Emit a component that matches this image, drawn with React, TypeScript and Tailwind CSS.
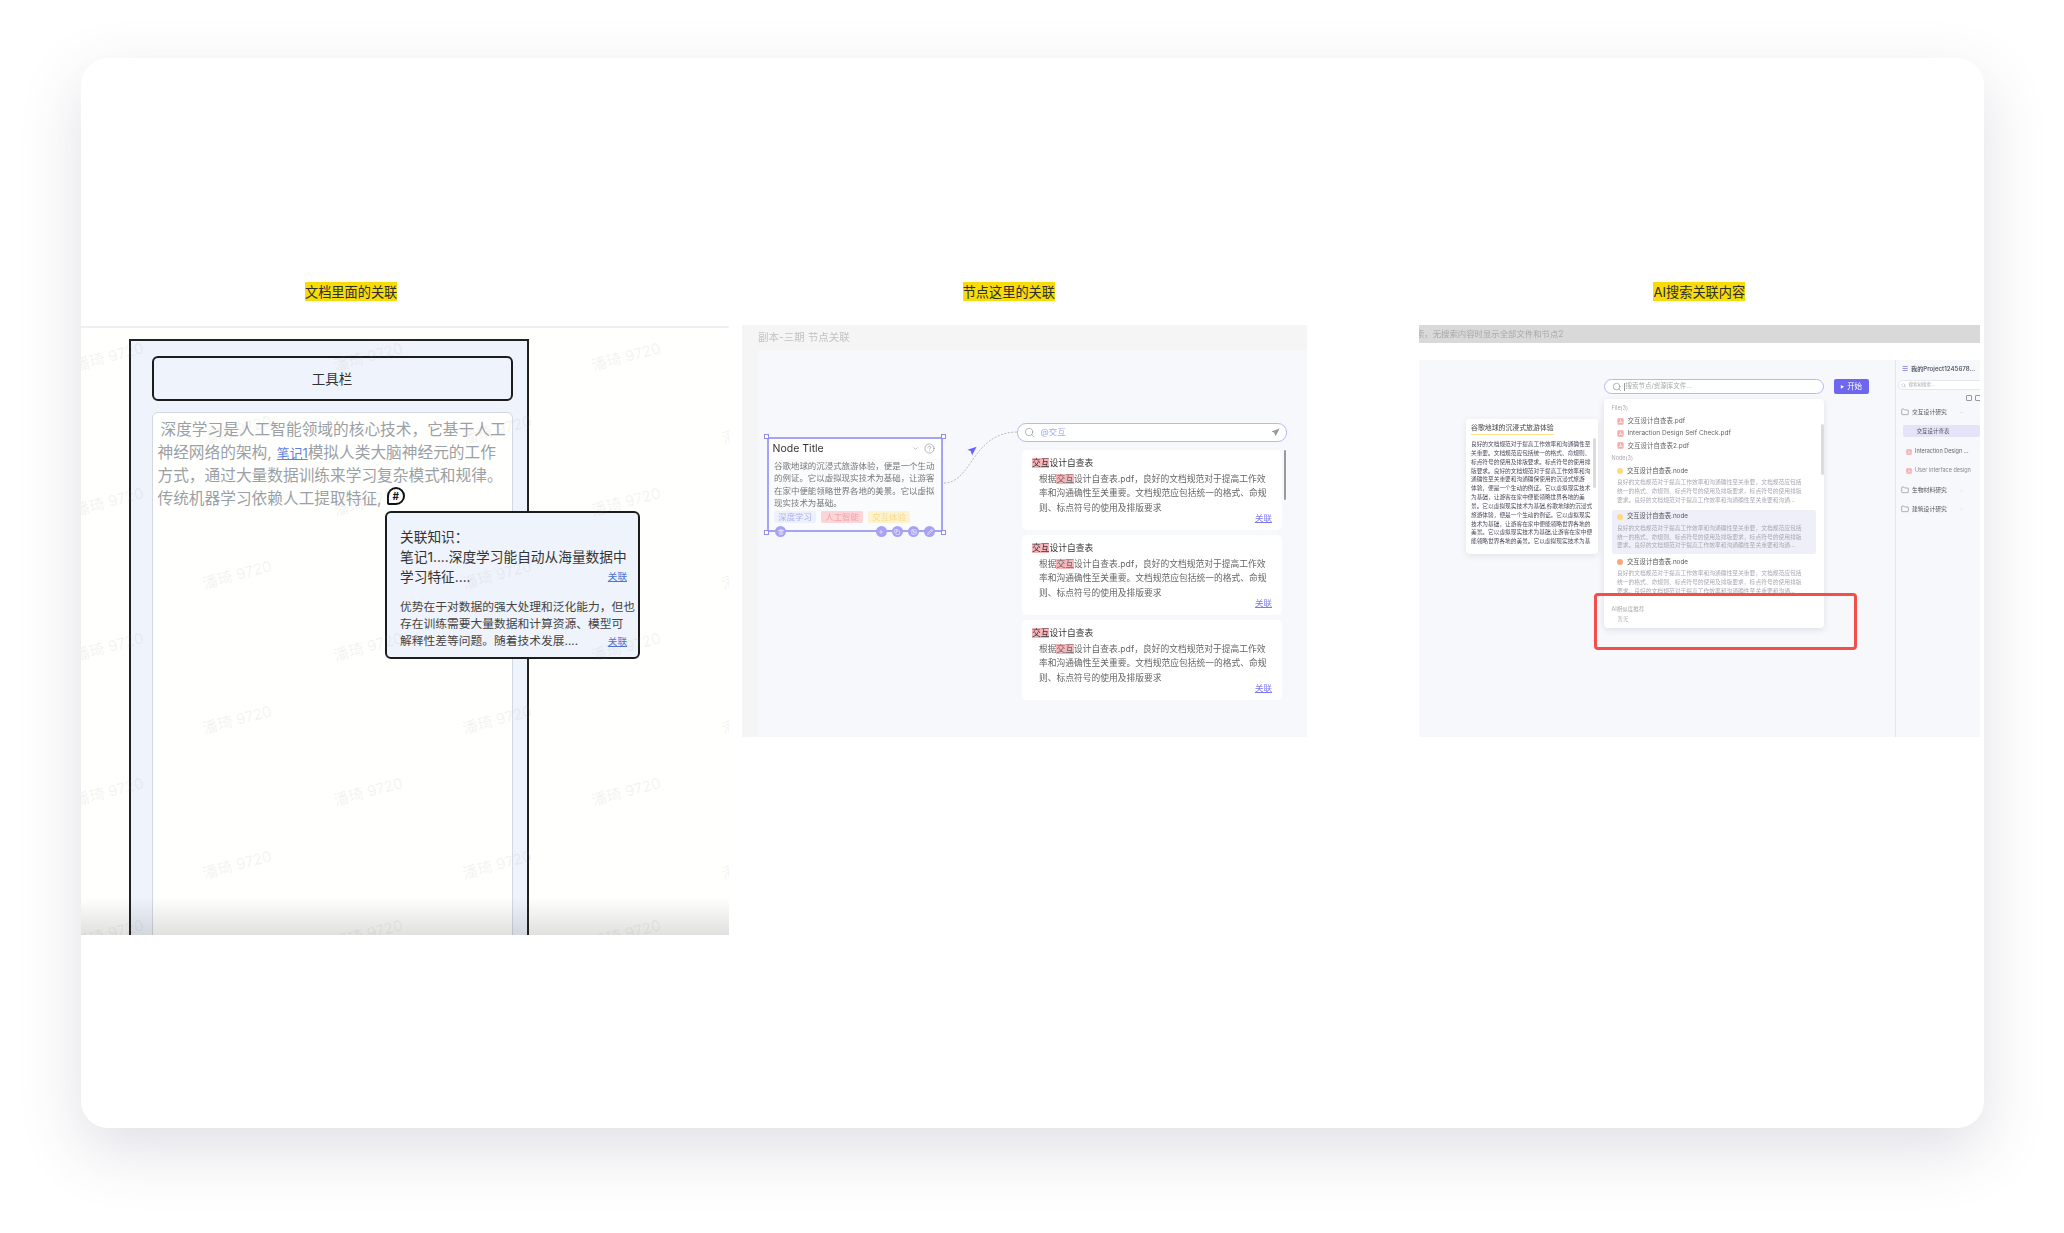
import { ChevronDown, ChevronLeft, CircleHelp, Folder, Search, Plus, Copy, Image, Pencil, Trash2 } from "lucide-react";

const watermarks = [
  [27, 29], [286, 29], [544, 29],
  [155, 102], [415, 102], [674, 102],
  [27, 174], [286, 174], [544, 174],
  [155, 247], [415, 247], [674, 247],
  [27, 319], [286, 319], [544, 319],
  [155, 392], [415, 392], [674, 392],
  [27, 464], [286, 464], [544, 464],
  [155, 537], [415, 537], [674, 537],
  [27, 606], [286, 606], [544, 606],
];

const Plane = ({ className }: { className: string }) => (
  <svg viewBox="0 0 12 12" className={className} fill="currentColor">
    <path d="M11.5 0.8 L0.6 4.6 L4.6 6.4 L6.2 11 Z" />
    <path d="M11.5 0.8 L4.6 6.4 L5 9 Z" opacity="0.65" />
  </svg>
);

const Pdf = ({ className }: { className: string }) => (
  <svg viewBox="0 0 10 10" className={className}>
    <rect x="0.5" y="0.5" width="9" height="9" rx="1.5" fill="#f5a9a9" />
    <path d="M2.5 7.5 C4.5 6 5.2 4 4.8 2.5 C5 4.5 6 6 7.8 6.4 C6 6 4 6.5 2.5 7.5 Z" fill="none" stroke="#fff" strokeWidth="0.8" />
  </svg>
);

const Link = ({ className = "" }: { className?: string }) => (
  <span className={`underline whitespace-nowrap ${className}`}>关联</span>
);

const Title = ({ children, left }: { children: string; left: string }) => (
  <div className={`mt-[224px] h-[19px] w-fit bg-[#f7dc0a] text-[13.2px] leading-[20px] text-[#2d2d2d] whitespace-nowrap ${left}`}>
    {children}
  </div>
);

const ResultCard = () => (
  <div className="h-[80px] w-[260px] ml-[4.5px] rounded-[5px] bg-white pl-[10px] pt-[7px] text-[8.75px] whitespace-nowrap">
    <div className="leading-[12px] text-[#333]">
      <span className="bg-[#f5b5b9]">交互</span>设计自查表
    </div>
    <div className="ml-[7px] mt-[3px] leading-[14.4px] text-[#666]">
      <div>
        根据<span className="bg-[#f5b5b9]">交互</span>设计自查表.pdf，良好的文档规范对于提高工作效
      </div>
      <div>率和沟通确性至关重要。文档规范应包括统一的格式、命规</div>
      <div>则、标点符号的使用及排版要求</div>
    </div>
    <div className="flex justify-end pr-[10px] -mt-[2px] text-[8.5px] leading-[11px] text-[#7c78ee]">
      <Link />
    </div>
  </div>
);

const nodeLines = [
  "良好的文档规范对于提高工作效率和沟通确性至关重要，文档规范应包括",
  "统一的格式、命规则、标点符号的使用及排版要求，标点符号的使用排版",
  "要求。良好的文档规范对于提高工作效率和沟通确性至关重要和沟通...",
];

const NodeItem = ({ dot, active = false }: { dot: string; active?: boolean }) => (
  <div className={`h-[44px] w-[204px] rounded-[2px] pl-[5.5px] pt-[1px] whitespace-nowrap ${active ? "bg-[#efeffa]" : ""}`}>
    <div className="flex items-center gap-[4px] h-[11px] text-[6.3px] text-[#555]">
      <span className={`h-[6px] w-[6px] rounded-full ${dot}`} />
      交互设计自查表.node
    </div>
    <div className="mt-[1.5px] text-[5.77px] leading-[8.8px] text-[#a9a9b4]">
      {nodeLines.map((l) => (
        <div key={l}>{l}</div>
      ))}
    </div>
  </div>
);

const docLines = [
  "良好的文档规范对于提高工作效率和沟通确性至",
  "关重要。文档规范应包括统一的格式、命规则、",
  "标点符号的使用及排版要求。标点符号的使用排",
  "版要求。良好的文档规范对于提高工作效率和沟",
  "通确性至关重要和沟通确保使用的沉浸式旅游",
  "体验，便是一个生动的例证。它以虚拟现实技术",
  "为基础，让游客在家中便能领略世界各地的美",
  "景。它以虚拟现实技术为基础,谷歌地球的沉浸式",
  "旅游体验，便是一个生动的例证。它以虚拟现实",
  "技术为基础，让游客在家中便能领略世界各地的",
  "美景。它以虚拟现实技术为基础,让游客在家中便",
  "能领略世界各地的美景。它以虚拟现实技术为基",
];

const FolderRow = ({ label, open = false }: { label: string; open?: boolean }) => (
  <div className="flex h-[12px] items-center pl-[5px] text-[5.8px] text-[#555] whitespace-nowrap">
    <Folder className="h-[8px] w-[8px] text-[#666]" strokeWidth={1.5} />
    <span className="ml-[3px] w-[47px]">{label}</span>
    {open ? (
      <ChevronDown className="h-[5px] w-[5px] text-[#bbb]" />
    ) : (
      <ChevronLeft className="h-[5px] w-[5px] text-[#ccc]" />
    )}
  </div>
);

export default function App() {
  return (
    <div className="h-[1233px] w-[2064px] overflow-hidden bg-white pl-[81px] pt-[58px] font-['Inter','Noto_Sans_CJK_SC',sans-serif]">
      <div className="flex h-[1070px] w-[1903px] items-start rounded-[27px] bg-white shadow-[0_22px_62px_rgba(70,65,100,0.17)]">
        {/* 文档 */}
        <div className="w-[648px] shrink-0">
          <Title left="ml-[224px]">文档里面的关联</Title>
          <div className="relative mt-[25px] h-[609px] overflow-hidden border-t-2 border-[#f0f0f2] bg-[#fffffd] pl-[47.5px] pt-[11px]">
            <div className="flex h-[620px] w-[400px] flex-col border-2 border-[#222] bg-[#eff3fb] px-[21px] pt-[15px]">
              <div className="flex h-[45px] w-[361px] shrink-0 items-center justify-center rounded-[6px] border-2 border-[#1c1c1c] pt-[2px] text-[13.5px] text-[#333]">
                工具栏
              </div>
              <div className="mt-[11px] flex-1 w-[361px] rounded-[6px] border border-[#d3d7e0] bg-[#fffffd] pl-[5px] pt-[6px] text-[15.7px] leading-[22.7px] text-[#9b9fa6] whitespace-nowrap">
                <div className="pl-[3px]">深度学习是人工智能领域的核心技术，它基于人工</div>
                <div>
                  神经网络的架构,<span className="ml-[5px] text-[12.8px] text-[#5b82de] underline">笔记1</span>模拟人类大脑神经元的工作
                </div>
                <div>方式，通过大量数据训练来学习复杂模式和规律。</div>
                <div className="flex items-center">
                  传统机器学习依赖人工提取特征,
                  <span className="ml-[5px] flex h-[18px] w-[18px] -translate-y-[3px] items-center justify-center rounded-[50%_50%_50%_10%] border-2 border-[#111] bg-white text-[10px] font-bold leading-none text-[#111]">
                    #
                  </span>
                </div>
              </div>
            </div>
            <div className="absolute left-[304px] top-[183px] h-[148px] w-[255px] rounded-[6px] border-2 border-[#1c1c1c] bg-[#eff3fb] pl-[13px] pr-[11px] pt-[14px] whitespace-nowrap">
              <div className="text-[13.7px] leading-[20px] text-[#333]">
                <div>关联知识：</div>
                <div>笔记1....深度学习能自动从海量数据中</div>
                <div className="flex items-center justify-between">
                  <span>学习特征....</span>
                  <Link className="text-[9.6px] leading-[16px] text-[#4a73d8]" />
                </div>
              </div>
              <div className="mt-[12px] text-[11.75px] leading-[17px] text-[#444]">
                <div>优势在于对数据的强大处理和泛化能力，但也</div>
                <div>存在训练需要大量数据和计算资源、模型可</div>
                <div className="flex items-center justify-between">
                  <span>解释性差等问题。随着技术发展....</span>
                  <Link className="text-[9.6px] leading-[16px] text-[#4a73d8]" />
                </div>
              </div>
            </div>
            {watermarks.map(([x, y]) => (
              <span
                key={`${x}-${y}`}
                className="pointer-events-none absolute -rotate-[15deg] text-[15px] leading-none text-[#9a9a9a]/12 whitespace-nowrap"
                style={{ left: x - 34, top: y - 8 }}
              >
                潘琦 9720
              </span>
            ))}
            <div className="absolute bottom-0 left-0 h-[38px] w-full bg-linear-to-b from-transparent to-[#000]/12" />
          </div>
        </div>

        {/* 节点 */}
        <div className="ml-[13px] w-[565px] shrink-0">
          <Title left="ml-[220.7px]">节点这里的关联</Title>
          <div className="mt-[24px] h-[412px] bg-[#f5f5f6] blur-[0.5px]">
            <div className="h-[25px] pl-[16px] text-[10.5px] leading-[25px] text-[#c2c2c2]">副本-三期 节点关联</div>
            <div className="relative ml-[16px] flex h-[387px] bg-[#f7f8fb]">
              <div className="relative ml-[8.6px] mt-[87px] h-[95px] w-[176.4px] shrink-0 border-2 border-[#a6a3f5] bg-[#fafbfd]">
                <div className="flex h-[20px] items-center bg-white pl-[4px] pr-[6px] pb-[1px] text-[10.5px] text-[#333]">
                  <span className="flex-1">Node Title</span>
                  <ChevronDown className="h-[7px] w-[7px] text-[#999]" />
                  <CircleHelp className="ml-[5px] h-[11px] w-[11px] text-[#888]" strokeWidth={1.3} />
                </div>
                <div className="pl-[5.5px] pt-[1px] text-[8.45px] leading-[12.3px] text-[#777] whitespace-nowrap">
                  <div>谷歌地球的沉浸式旅游体验，便是一个生动</div>
                  <div>的例证。它以虚拟现实技术为基础，让游客</div>
                  <div>在家中便能领略世界各地的美景。它以虚拟</div>
                  <div>现实技术为基础。</div>
                </div>
                <div className="ml-[5.5px] mt-[2px] flex gap-[5px] text-[8.4px] leading-[12px]">
                  <span className="w-[42px] rounded-[2px] bg-[#eef0fc] text-center text-[#a7b0f2]">深度学习</span>
                  <span className="w-[42px] rounded-[2px] bg-[#fbd5d8] text-center text-[#f3a3a8]">人工智能</span>
                  <span className="w-[42px] rounded-[2px] bg-[#fff3cf] text-center text-[#f5da85]">交互体验</span>
                </div>
                {[
                  ["-left-[5px] -top-[5px]"],
                  ["-right-[5px] -top-[5px]"],
                  ["-left-[5px] -bottom-[5px]"],
                  ["-right-[5px] -bottom-[5px]"],
                ].map(([pos]) => (
                  <span key={pos} className={`absolute h-[5px] w-[5px] border border-[#8f8bf2] bg-white ${pos}`} />
                ))}
                <span className="absolute -bottom-[7px] left-[6.5px] flex h-[11px] w-[11px] items-center justify-center rounded-full bg-[#a6a3f5] text-white">
                  <Trash2 className="h-[6px] w-[6px]" />
                </span>
                <div className="absolute -bottom-[7px] right-[5.5px] flex gap-[5.3px]">
                  {[Plus, Copy, Image, Pencil].map((Icon, i) => (
                    <span key={i} className="flex h-[11px] w-[11px] items-center justify-center rounded-full bg-[#a6a3f5] text-white">
                      <Icon className="h-[6px] w-[6px]" />
                    </span>
                  ))}
                </div>
              </div>
              <svg className="absolute left-[184px] top-[75px] h-[65px] w-[80px]" viewBox="0 0 80 65" fill="none">
                <path d="M2 58 C30 58 30 7 76 7" stroke="#a9a9ae" strokeWidth="0.8" strokeDasharray="2 1.5" />
              </svg>
              <Plane className="absolute left-[209px] top-[96px] h-[10px] w-[10px] text-[#6c63ff]" />
              <div className="ml-[74.5px] mt-[73px] w-[270px] shrink-0">
                <div className="flex h-[19px] items-center rounded-[9px] border border-[#b9b6f7] bg-white pl-[6px] pr-[6px] text-[8.5px] text-[#9fa8ee]">
                  <Search className="h-[11px] w-[11px] text-[#888]" strokeWidth={1.3} />
                  <span className="ml-[5px] flex-1">@交互</span>
                  <Plane className="h-[9px] w-[9px] text-[#999]" />
                </div>
                <div className="relative mt-[8px] flex flex-col gap-[5px]">
                  <ResultCard />
                  <ResultCard />
                  <ResultCard />
                  <span className="absolute left-[267px] top-0 h-[50px] w-[2px] rounded-full bg-[#9b9b9b]" />
                </div>
              </div>
            </div>
          </div>
        </div>

        {/* AI搜索 */}
        <div className="ml-[112px] w-[561px] shrink-0">
          <Title left="ml-[234.4px]">AI搜索关联内容</Title>
          <div className="mt-[24px] blur-[0.5px]">
            <div className="h-[18px] overflow-hidden bg-[#d9d9d9] text-[8.4px] leading-[18px] text-[#a8a8a8] whitespace-nowrap">
              <span className="-ml-[3px] inline-block">索，无搜索内容时显示全部文件和节点2</span>
            </div>
            <div className="relative mt-[17px] flex h-[377px] bg-[#f7f8fb]">
              <div className="relative ml-[47px] mt-[59px] h-[135px] w-[132px] shrink-0 rounded-[4px] bg-white pl-[5px] pt-[4px] shadow-[0_2px_6px_rgba(80,80,120,0.12)]">
                <div className="w-fit border-b-[1.5px] border-[#ffe08a] pb-[1px] text-[6.9px] leading-[10px] text-[#444] whitespace-nowrap">
                  谷歌地球的沉浸式旅游体验
                </div>
                <div className="mt-[5px] text-[5.7px] leading-[8.85px] text-[#4a4a5a] whitespace-nowrap">
                  {docLines.map((l) => (
                    <div key={l}>{l}</div>
                  ))}
                </div>
                <span className="absolute right-[2.5px] top-[19px] h-[50px] w-[3px] rounded-full bg-[#dcdcdc]" />
              </div>

              <div className="ml-[5.5px] mt-[19px] w-[220.5px] shrink-0">
                <div className="flex h-[15px] items-center rounded-full border border-[#b9b6f7] bg-white pl-[7px] text-[6.5px] text-[#aaa]">
                  <Search className="h-[10px] w-[10px] text-[#777]" strokeWidth={1.3} />
                  <span className="ml-[2px] mr-[1px] h-[8px] w-px bg-[#999]" />
                  搜索节点/资源库文件...
                </div>
                <div className="relative mt-[5px] h-[229px] rounded-[4px] bg-white shadow-[0_2px_6px_rgba(80,80,120,0.14)]">
                  <div className="h-[194px] overflow-hidden pl-[8px] pt-[5px] whitespace-nowrap">
                    <div className="text-[5.5px] leading-[8px] text-[#aaa]">File(3)</div>
                    <div className="mt-[3px] pl-[5px] text-[6.5px] leading-[12.3px] text-[#666]">
                      {["交互设计自查表.pdf", "Interaction Design Self Check.pdf", "交互设计自查表2.pdf"].map((f) => (
                        <div key={f} className="flex items-center gap-[4px]">
                          <Pdf className="h-[7px] w-[7px]" />
                          {f}
                        </div>
                      ))}
                    </div>
                    <div className="mt-[2px] text-[5.5px] leading-[8px] text-[#aaa]">Node(3)</div>
                    <div className="mt-[3px] flex flex-col gap-[1.5px]">
                      <NodeItem dot="bg-[#ffd97a]" />
                      <NodeItem dot="bg-[#ffd97a]" active />
                      <NodeItem dot="bg-[#f9a87a]" />
                    </div>
                  </div>
                  <div className="pl-[8px] pt-[11px] text-[5.5px] leading-[10px] text-[#aaa]">
                    <div>AI相似度推荐</div>
                    <div className="pl-[6px] text-[#bbb]">暂无</div>
                  </div>
                  <span className="absolute right-[0.5px] top-[25px] h-[51px] w-[3px] rounded-full bg-[#dcdcdc]" />
                </div>
              </div>

              <div className="ml-[9.6px] mt-[19px] flex h-[15px] w-[35.4px] shrink-0 items-center justify-center gap-[3px] rounded-[2px] bg-[#6d66ee] text-[7.5px] text-white">
                <span className="text-[4px]">▶</span>开始
              </div>

              <div className="ml-[26px] w-[84.6px] shrink-0 overflow-hidden border-l border-[#e6e7ec] pt-[3px]">
                <div className="flex h-[12px] items-center pl-[6px] text-[6.2px] font-medium text-[#44445a] whitespace-nowrap">
                  <span className="mr-[3px] text-[7px] text-[#7c78ee]">☰</span>我的Project1245678...
                </div>
                <div className="ml-[2.5px] mt-[5px] flex h-[10px] w-[90px] items-center rounded-full border border-[#e6e7ec] bg-white pl-[2px] text-[4.5px] text-[#aaa] whitespace-nowrap">
                  <Search className="mr-[2px] h-[5px] w-[5px]" />
                  搜索树搜索...
                </div>
                <div className="mt-[5px] flex h-[7px] justify-end gap-[3px] -mr-[1px]">
                  <span className="h-[6px] w-[6px] rounded-[1px] border border-[#999]" />
                  <span className="h-[6px] w-[6px] rounded-[1px] border border-[#999]" />
                </div>
                <div className="mt-[4px]">
                  <FolderRow label="交互设计研究" open />
                </div>
                <div className="ml-[7.5px] mt-[7px] h-[12px] rounded-[2px] bg-[#e4e3f8] pl-[13px] text-[5.5px] leading-[12px] text-[#555] whitespace-nowrap">
                  交互设计查表
                </div>
                <div className="mt-[11px] flex h-[7px] items-center gap-[3px] pl-[10px] text-[5.5px] text-[#666] whitespace-nowrap">
                  <Pdf className="h-[6px] w-[6px]" />
                  Interaction Design ...
                </div>
                <div className="mt-[12px] flex h-[7px] items-center gap-[3px] pl-[10px] text-[5.5px] text-[#888] whitespace-nowrap">
                  <Pdf className="h-[6px] w-[6px]" />
                  User interface design
                </div>
                <div className="mt-[10px]">
                  <FolderRow label="生物材料研究" />
                </div>
                <div className="mt-[7px]">
                  <FolderRow label="建筑设计研究" />
                </div>
              </div>

              <div className="absolute left-[175px] top-[233px] h-[57px] w-[262.5px] rounded-[4px] border-[3px] border-[#f44e4a]" />
            </div>
          </div>
        </div>
      </div>
    </div>
  );
}
